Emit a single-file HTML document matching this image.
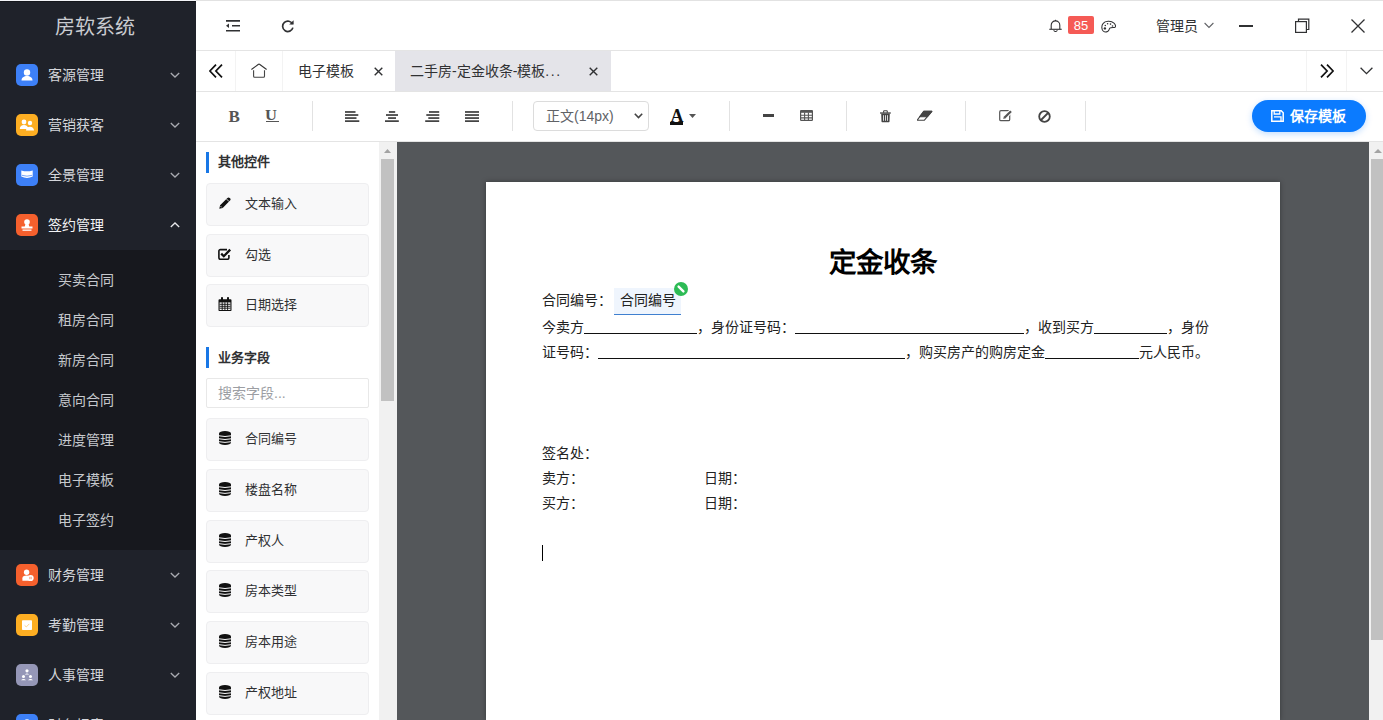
<!DOCTYPE html>
<html lang="zh-CN"><head><meta charset="utf-8">
<style>
*{box-sizing:border-box;margin:0;padding:0}
html,body{width:1383px;height:720px;overflow:hidden;background:#fff;font-family:"Liberation Sans",sans-serif;font-size:14px;color:#303133}
.abs{position:absolute}
svg{display:block}
/* sidebar */
#side{position:absolute;left:0;top:1px;width:196px;height:719px;background:#1f222a;overflow:hidden}
#logo{position:absolute;left:0;top:1px;width:196px;height:50px;line-height:50px;text-align:center;color:#c9cbd0;font-size:20px;padding-right:6px}
.mi{position:absolute;left:0;width:196px;height:50px;color:#d4d6db}
.mi .ic{position:absolute;left:16px;top:14px;width:22px;height:22px;border-radius:5px}
.mi .tx{position:absolute;left:48px;top:0;line-height:50px;font-size:14px}
.mi .ch{position:absolute;left:170px;top:21px}
#sub{position:absolute;left:0;top:249px;width:196px;height:300px;background:#17181e}
.si{position:absolute;left:58px;height:40px;line-height:40px;color:#c6c8cd;font-size:14px}
/* header */
#hdr{position:absolute;left:196px;top:0;width:1187px;height:51px;border-bottom:1px solid #e4e4e4;background:#fff}
#tabs{position:absolute;left:196px;top:51px;width:1187px;height:41px;border-bottom:1px solid #e4e4e4;background:#fff}
#tb{position:absolute;left:196px;top:92px;width:1187px;height:50px;background:#fff;border-bottom:1px solid #e4e4e4}
#lp{position:absolute;left:196px;top:142px;width:184px;height:578px;background:#fff}
#lsb{position:absolute;left:379px;top:142px;width:18px;height:578px;background:#f1f1f1}
#cv{position:absolute;left:397px;top:142px;width:972px;height:578px;background:#54575a}
#rsb{position:absolute;left:1369px;top:142px;width:14px;height:578px;background:#f1f1f1}
#paper{position:absolute;left:486px;top:182px;width:794px;height:538px;background:#fff;box-shadow:0 0 5px rgba(0,0,0,0.35)}
.card{left:10px;width:163px;height:43px;background:#f8f8f9;border:1px solid #eeeef0;border-radius:4px}
.ct{position:absolute;left:38px;top:-1px;line-height:41px;font-size:13px;color:#303133}
.pl{position:absolute;left:56px;height:20px;line-height:20px;font-size:14px;color:#222;white-space:nowrap}
.ul{display:inline-block;height:14px;border-bottom:1px solid #111;vertical-align:-2px}
.fld{position:relative;display:inline-block;margin-left:2px;padding:0 5.5px;height:27px;line-height:25px;vertical-align:-1px;top:-1px;background:#eff5fd;border-bottom:1px solid #3f80d0}
.badge{position:absolute;right:-7px;top:-6px}
.badge svg{display:block}
</style></head><body>
<div class="abs" style="left:0;top:0;width:196px;height:1px;background:#f3f4f8"></div>
<div id="side">
  <div class="abs" style="left:0;top:0;width:196px;height:1px;background:#15171c"></div>
  <div id="logo">房软系统</div>
  <div class="mi" style="top:49px"><svg class="ic" width="22" height="22" viewBox="0 0 22 22" style="background:#3d80f7"><circle cx="11" cy="8.5" r="3.2" fill="#fff"/><path d="M5.5 16.5c0-3 2.5-4.5 5.5-4.5s5.5 1.5 5.5 4.5z" fill="#fff"/></svg><span class="tx">客源管理</span><svg class="ch" width="10" height="8" viewBox="0 0 10 8"><path d="M0.8 2l4.2 4 4.2-4" stroke="#a9abb1" stroke-width="1.3" fill="none"/></svg></div>
  <div class="mi" style="top:99px"><svg class="ic" width="22" height="22" viewBox="0 0 22 22" style="background:#fdae22"><circle cx="8" cy="8" r="2.4" fill="#fff"/><circle cx="14" cy="9" r="2.2" fill="#fff"/><path d="M3.8 15c0-2.5 1.8-4 4.2-4s4.2 1.5 4.2 4z M10 16.5c0-2.3 1.8-3.8 4-3.8s4 1.5 4 3.8z" fill="#fff"/></svg><span class="tx">营销获客</span><svg class="ch" width="10" height="8" viewBox="0 0 10 8"><path d="M0.8 2l4.2 4 4.2-4" stroke="#a9abb1" stroke-width="1.3" fill="none"/></svg></div>
  <div class="mi" style="top:149px"><svg class="ic" width="22" height="22" viewBox="0 0 22 22" style="background:#3d80f7"><path d="M5.3 6.4Q11 8.2 16.7 6.4V12.6Q11 15.4 5.3 12.6Z" fill="#fff"/><path d="M5.8 11.3Q11 13 16.2 11.3" stroke="#3d80f7" stroke-width="0.7" fill="none"/></svg><span class="tx">全景管理</span><svg class="ch" width="10" height="8" viewBox="0 0 10 8"><path d="M0.8 2l4.2 4 4.2-4" stroke="#a9abb1" stroke-width="1.3" fill="none"/></svg></div>
  <div class="mi" style="top:199px"><svg class="ic" width="22" height="22" viewBox="0 0 22 22" style="background:#f5602d"><circle cx="11" cy="8" r="2.8" fill="#fff"/><path d="M9.5 10h3l0.8 2.5h3.2v2h-11v-2h3.2z" fill="#fff"/><rect x="6.5" y="15.5" width="9" height="1.3" fill="#fff"/></svg><span class="tx" style="color:#f2f3f5">签约管理</span><svg class="ch" width="10" height="8" viewBox="0 0 10 8"><path d="M0.8 6l4.2-4 4.2 4" stroke="#e8e9ec" stroke-width="1.3" fill="none"/></svg></div>
  <div class="mi" style="top:549px"><svg class="ic" width="22" height="22" viewBox="0 0 22 22" style="background:#f5602d"><circle cx="10.6" cy="8.3" r="2.7" fill="#fff"/><path d="M6.4 16.8V14.2q0-2.6 4.2-2.6q2.4 0 3.4 0.8V16.8z" fill="#fff"/><circle cx="14.6" cy="14" r="3.1" fill="#fff"/><path d="M13.8 12.8v2.4M15.2 12.8v2.4" stroke="#f5602d" stroke-width="0.6"/></svg><span class="tx">财务管理</span><svg class="ch" width="10" height="8" viewBox="0 0 10 8"><path d="M0.8 2l4.2 4 4.2-4" stroke="#a9abb1" stroke-width="1.3" fill="none"/></svg></div>
  <div class="mi" style="top:599px"><svg class="ic" width="22" height="22" viewBox="0 0 22 22" style="background:#fdae22"><rect x="6" y="6.2" width="10" height="9.8" rx="0.8" fill="#fff"/><path d="M8.6 11.4l1.7 1.5 3-3" stroke="#fdd48a" stroke-width="1" fill="none"/></svg><span class="tx">考勤管理</span><svg class="ch" width="10" height="8" viewBox="0 0 10 8"><path d="M0.8 2l4.2 4 4.2-4" stroke="#a9abb1" stroke-width="1.3" fill="none"/></svg></div>
  <div class="mi" style="top:649px"><svg class="ic" width="22" height="22" viewBox="0 0 22 22" style="background:#9597b7"><circle cx="11" cy="6.8" r="1.6" fill="#fff"/><path d="M8.8 10.5q2.2-2 4.4 0z" fill="#fff"/><circle cx="7.5" cy="12.5" r="1.5" fill="#fff"/><circle cx="14.5" cy="12.5" r="1.5" fill="#fff"/><path d="M5 16.2q2.5-2.6 5 0z M12 16.2q2.5-2.6 5 0z" fill="#fff"/></svg><span class="tx">人事管理</span><svg class="ch" width="10" height="8" viewBox="0 0 10 8"><path d="M0.8 2l4.2 4 4.2-4" stroke="#a9abb1" stroke-width="1.3" fill="none"/></svg></div>
  <div class="mi" style="top:699px"><svg class="ic" width="22" height="22" viewBox="0 0 22 22" style="background:#3d80f7"><circle cx="11" cy="8.5" r="3.2" fill="#fff"/><path d="M5.5 16.5c0-3 2.5-4.5 5.5-4.5s5.5 1.5 5.5 4.5z" fill="#fff"/></svg><span class="tx">财务报表</span><svg class="ch" width="10" height="8" viewBox="0 0 10 8"><path d="M0.8 2l4.2 4 4.2-4" stroke="#a9abb1" stroke-width="1.3" fill="none"/></svg></div>
  <div id="sub">
    <div class="si" style="top:10px">买卖合同</div>
    <div class="si" style="top:50px">租房合同</div>
    <div class="si" style="top:90px">新房合同</div>
    <div class="si" style="top:130px">意向合同</div>
    <div class="si" style="top:170px">进度管理</div>
    <div class="si" style="top:210px">电子模板</div>
    <div class="si" style="top:250px">电子签约</div>
  </div>
</div>
<div id="hdr">
  <div class="abs" style="left:0;top:0;width:1187px;height:1px;background:#e2e2e2"></div>
  <svg class="abs" style="left:30px;top:20px" width="14" height="12" viewBox="0 0 14 12"><path d="M0 0.9h14M6 5.8h8M0 10.8h14" stroke="#303133" stroke-width="1.6"/><path d="M0 5.8l3-2.2v4.4z" fill="#303133"/></svg>
  <svg class="abs" style="left:85px;top:19px" width="14" height="14" viewBox="0 0 14 14"><path d="M11.6 5.2A5.2 5.2 0 1 0 11.9 8.6" stroke="#303133" stroke-width="1.7" fill="none"/><path d="M8.2 5.6h4.4V1.2z" fill="#303133"/></svg>
  <svg class="abs" style="left:853px;top:19px" width="13" height="13" viewBox="0 0 13 13"><path d="M2.2 10V6.2a4.3 4.3 0 0 1 8.6 0V10" stroke="#303133" stroke-width="1.1" fill="none"/><path d="M0.3 10.3h12.4" stroke="#303133" stroke-width="1.1"/><path d="M6.5 0.8v1.2" stroke="#303133" stroke-width="1.1"/><path d="M5 11v0.8q0 0.7 0.7 0.7h1.6q0.7 0 0.7-0.7V11" stroke="#303133" stroke-width="1" fill="none"/></svg>
  <div class="abs" style="left:872px;top:16px;width:26px;height:18px;background:#f55a55;border-radius:2px;color:#fff;font-size:13px;line-height:20px;text-align:center">85</div>
  <svg class="abs" style="left:905px;top:19.5px" width="16" height="13" viewBox="0 0 16 13"><path d="M2.5 11.4C0.6 10.2 0.2 5.8 2 3.6C4 0.9 10 0.4 13 3.1C14.5 4.5 15 6.5 14 7.2C13 7.8 10.2 7 8.8 8.2C8 9 8.4 10.6 6.6 11.4C5.1 12.1 3.6 12 2.5 11.4Z" stroke="#303133" stroke-width="1.05" fill="none"/><circle cx="3.9" cy="8.4" r="1.2" fill="#303133"/><circle cx="4.3" cy="5.5" r="0.8" fill="#303133"/><circle cx="6.6" cy="3.8" r="0.8" fill="#303133"/><circle cx="9.5" cy="4.1" r="0.8" fill="#303133"/><circle cx="11.5" cy="6" r="0.8" fill="#303133"/></svg>
  <div class="abs" style="left:960px;top:1px;line-height:51px;font-size:14px;color:#303133">管理员</div>
  <svg class="abs" style="left:1008px;top:22px" width="10" height="7" viewBox="0 0 10 7"><path d="M0.6 1l4.4 4.4 4.4-4.4" stroke="#606266" stroke-width="1.1" fill="none"/></svg>
  <div class="abs" style="left:1043px;top:25px;width:14px;height:2px;background:#303133"></div>
  <svg class="abs" style="left:1099px;top:18px" width="15" height="15" viewBox="0 0 15 15"><path d="M3.5 3.5V1.2h10.3v10.3h-2.3" stroke="#303133" stroke-width="1.2" fill="none"/><rect x="0.6" y="3.6" width="10.8" height="10.8" stroke="#303133" stroke-width="1.2" fill="none"/></svg>
  <svg class="abs" style="left:1155px;top:19px" width="14" height="14" viewBox="0 0 14 14"><path d="M0.5 0.5l13 13M13.5 0.5l-13 13" stroke="#303133" stroke-width="1.3"/></svg>
</div>
<div id="tabs">
  <div class="abs" style="left:39px;top:0;width:1px;height:40px;background:#f3f3f3"></div>
  <div class="abs" style="left:86px;top:0;width:1px;height:40px;background:#f3f3f3"></div>
  <svg class="abs" style="left:13px;top:13px" width="14" height="14" viewBox="0 0 14 14"><path d="M7 0.6L0.9 7 7 13.4M13 0.6L6.9 7 13 13.4" stroke="#111" stroke-width="1.7" fill="none"/></svg>
  <svg class="abs" style="left:55px;top:12px" width="16" height="15" viewBox="0 0 16 15"><path d="M0.4 6.5L7.5 1.3Q8 0.9 8.5 1.3L15.6 6.5" stroke="#333" stroke-width="1.1" fill="none"/><path d="M2.6 7.3V13.3Q2.6 14.3 3.6 14.3H12.5Q13.5 14.3 13.5 13.3V7.3" stroke="#444" stroke-width="1.1" fill="none"/></svg>
  <div class="abs" style="left:102px;top:0;line-height:40px;font-size:14px;color:#303133">电子模板</div>
  <svg class="abs" style="left:178px;top:16px" width="9" height="9" viewBox="0 0 9 9"><path d="M0.7 0.7l7.6 7.6M8.3 0.7l-7.6 7.6" stroke="#303133" stroke-width="1.4"/></svg>
  <div class="abs" style="left:199px;top:0;width:216px;height:40px;background:#e4e4e9"></div>
  <div class="abs" style="left:214px;top:0;line-height:40px;font-size:14px;color:#303133">二手房-定金收条-模板<span style="letter-spacing:1.6px">...</span></div>
  <svg class="abs" style="left:393px;top:16px" width="9" height="9" viewBox="0 0 9 9"><path d="M0.7 0.7l7.6 7.6M8.3 0.7l-7.6 7.6" stroke="#303133" stroke-width="1.4"/></svg>
  <div class="abs" style="left:1110px;top:0;width:1px;height:40px;background:#f3f3f3"></div>
  <div class="abs" style="left:1150px;top:0;width:1px;height:40px;background:#f3f3f3"></div>
  <svg class="abs" style="left:1124px;top:13px" width="14" height="14" viewBox="0 0 14 14"><path d="M1 0.6L7.1 7 1 13.4M7 0.6L13.1 7 7 13.4" stroke="#111" stroke-width="1.7" fill="none"/></svg>
  <svg class="abs" style="left:1164px;top:16px" width="13" height="8" viewBox="0 0 13 8"><path d="M0.6 0.8l5.9 5.9 5.9-5.9" stroke="#303133" stroke-width="1.3" fill="none"/></svg>
</div>
<div id="tb">
  <div class="abs" style="left:32.5px;top:1px;line-height:48px;font-family:'Liberation Serif',serif;font-weight:bold;font-size:17px;color:#555">B</div>
  <div class="abs" style="left:69px;top:0;line-height:47px;font-family:'Liberation Serif',serif;font-weight:bold;font-size:15px;color:#555;transform:scaleX(1.1);transform-origin:left">U</div>
  <div class="abs" style="left:69.5px;top:28.8px;width:13px;height:1.5px;background:#555"></div>
  <div class="abs" style="left:116px;top:9px;width:1px;height:30px;background:#e2e2e2"></div>
  <svg class="abs" style="left:149px;top:18.5px" width="15" height="12" viewBox="0 0 15 12"><rect x="0" y="0.10" width="10.5" height="1.75" fill="#444"/><rect x="0" y="3.15" width="13.3" height="1.75" fill="#444"/><rect x="0" y="6.20" width="11.5" height="1.75" fill="#444"/><rect x="0" y="9.25" width="14.3" height="1.75" fill="#444"/></svg>
  <svg class="abs" style="left:189px;top:18.5px" width="15" height="12" viewBox="0 0 15 12"><rect x="3.9" y="0.10" width="6.3" height="1.75" fill="#444"/><rect x="1" y="3.15" width="12" height="1.75" fill="#444"/><rect x="3.1" y="6.20" width="7.9" height="1.75" fill="#444"/><rect x="0" y="9.25" width="13.8" height="1.75" fill="#444"/></svg>
  <svg class="abs" style="left:229px;top:18.5px" width="15" height="12" viewBox="0 0 15 12"><rect x="4" y="0.10" width="10.2" height="1.75" fill="#444"/><rect x="1.3" y="3.15" width="13" height="1.75" fill="#444"/><rect x="3.3" y="6.20" width="11" height="1.75" fill="#444"/><rect x="0.2" y="9.25" width="14" height="1.75" fill="#444"/></svg>
  <svg class="abs" style="left:269px;top:18.5px" width="15" height="12" viewBox="0 0 15 12"><rect x="0" y="0.10" width="14" height="1.75" fill="#444"/><rect x="0" y="3.15" width="14" height="1.75" fill="#444"/><rect x="0" y="6.20" width="14" height="1.75" fill="#444"/><rect x="0" y="9.25" width="14" height="1.75" fill="#444"/></svg>
  <div class="abs" style="left:316px;top:9px;width:1px;height:30px;background:#e2e2e2"></div>
  <div class="abs" style="left:337px;top:9px;width:116px;height:30px;border:1px solid #dcdcdc;border-radius:4px;background:#fff"></div>
  <div class="abs" style="left:350px;top:9px;line-height:30px;font-size:14px;color:#606266">正文(14px)</div>
  <svg class="abs" style="left:438px;top:21px" width="9" height="6" viewBox="0 0 9 6"><path d="M0.8 0.8l3.7 3.7 3.7-3.7" stroke="#444" stroke-width="1.6" fill="none"/></svg>
  <div class="abs" style="left:474.5px;top:0.5px;line-height:46px;font-family:'Liberation Serif',serif;font-weight:bold;font-size:18px;color:#111">A</div>
  <div class="abs" style="left:474px;top:30px;width:13px;height:2.5px;background:#111"></div>
  <svg class="abs" style="left:493px;top:22px" width="7" height="4" viewBox="0 0 7 4"><path d="M0 0h7L3.5 4z" fill="#555"/></svg>
  <div class="abs" style="left:533px;top:9px;width:1px;height:30px;background:#e2e2e2"></div>
  <div class="abs" style="left:567px;top:22px;width:11px;height:3px;background:#444"></div>
  <svg class="abs" style="left:604px;top:18px" width="13" height="11" viewBox="0 0 13 11"><rect x="0.6" y="0.6" width="11.8" height="9.8" rx="0.6" fill="none" stroke="#555" stroke-width="1.2"/><rect x="0.6" y="0.6" width="11.8" height="2.2" fill="#555"/><path d="M0.6 5.3h11.8M0.6 7.9h11.8M4.6 2.5v8M8.4 2.5v8" stroke="#555" stroke-width="1.1"/></svg>
  <div class="abs" style="left:650px;top:9px;width:1px;height:30px;background:#e2e2e2"></div>
  <svg class="abs" style="left:684px;top:17.5px" width="11" height="13" viewBox="0 0 11 13"><path d="M0 3h10.8" stroke="#444" stroke-width="1.3"/><path d="M3.6 2.8V1.4Q3.6 0.7 4.3 0.7H6.6Q7.3 0.7 7.3 1.4V2.8" stroke="#444" stroke-width="1.1" fill="none"/><path d="M1.2 3.6h8.6l-0.3 8q0 0.6-0.6 0.6H2.1q-0.6 0-0.6-0.6z" fill="#444"/><path d="M3.5 5.2v5.6M5.5 5.2v5.6M7.5 5.2v5.6" stroke="#fff" stroke-width="0.8"/></svg>
  <svg class="abs" style="left:721px;top:18px" width="16" height="12" viewBox="0 0 16 12"><path d="M6.8 1.4H14.8L7.2 10.3H0Z" fill="none" stroke="#444" stroke-width="1.1" stroke-linejoin="round"/><path d="M6.8 1.4H14.8L10.2 6.8H2.7Z" fill="#444" stroke="#444" stroke-width="1.1" stroke-linejoin="round"/></svg>
  <div class="abs" style="left:769px;top:9px;width:1px;height:30px;background:#e2e2e2"></div>
  <svg class="abs" style="left:803px;top:18px" width="15" height="12" viewBox="0 0 15 12"><rect x="0.7" y="0.7" width="10" height="10" rx="1.3" stroke="#555" stroke-width="1.2" fill="none"/><path d="M4.6 8.6L12.4 0.8" stroke="#fff" stroke-width="4.2"/><path d="M5.4 7.8L12 1.2" stroke="#555" stroke-width="2.3"/><path d="M4.2 9.1l0.7-2.4 1.6 1.6z" fill="#555"/></svg>
  <svg class="abs" style="left:842px;top:17.5px" width="13" height="13" viewBox="0 0 13 13"><circle cx="6.5" cy="6.5" r="5.3" stroke="#444" stroke-width="1.8" fill="none"/><path d="M3 10L10 3" stroke="#444" stroke-width="1.8"/></svg>
  <div class="abs" style="left:889px;top:9px;width:1px;height:30px;background:#e2e2e2"></div>
  <div class="abs" style="left:1056px;top:8px;width:114px;height:32px;border-radius:16px;background:#0b7bff;box-shadow:0 2px 6px rgba(11,123,255,0.25)"></div>
  <svg class="abs" style="left:1075px;top:18px" width="13" height="12" viewBox="0 0 13 12"><path d="M0.8 0.8h9.4l2 2v8.4H0.8z" stroke="#fff" stroke-width="1.5" fill="none"/><path d="M3.2 0.8v3.2h5.6V0.8" stroke="#fff" stroke-width="1.3" fill="none"/><path d="M3 6.8h7v4.4" stroke="#fff" stroke-width="1.3" fill="none"/></svg>
  <div class="abs" style="left:1094px;top:8px;line-height:32px;font-size:14px;font-weight:bold;color:#fff">保存模板</div>
</div>
<div id="lp">
  <div class="abs" style="left:10px;top:10px;width:3px;height:21px;background:#1877e6"></div>
  <div class="abs" style="left:22px;top:9px;line-height:21px;font-size:13px;font-weight:bold;color:#303133">其他控件</div>
  <div class="abs card" style="top:41px"><svg class="abs" style="left:12px;top:13px" width="12" height="12" viewBox="0 0 12 12"><path d="M0.3 11.7L1.1 8.3 8.4 1A1.6 1.6 0 0 1 10.7 1L11 1.3A1.6 1.6 0 0 1 11 3.6L3.7 10.9Z" fill="#111"/><path d="M7.5 2l2.5 2.5M1.6 9.2l1.2 1.2" stroke="#f8f8f9" stroke-width="0.8"/></svg><span class="ct">文本输入</span></div>
  <div class="abs card" style="top:92px"><svg class="abs" style="left:11px;top:13px" width="14" height="12" viewBox="0 0 14 12"><path d="M9 1.6H2.4A1.5 1.5 0 0 0 0.9 3.1v6.7a1.5 1.5 0 0 0 1.5 1.5h7a1.5 1.5 0 0 0 1.5-1.5V7" stroke="#111" stroke-width="1.6" fill="none"/><path d="M3.2 5.6l2.6 2.6 6.4-6.6" stroke="#111" stroke-width="2.3" fill="none"/></svg><span class="ct">勾选</span></div>
  <div class="abs card" style="top:142px"><svg class="abs" style="left:11px;top:12px" width="14" height="14" viewBox="0 0 14 14"><path d="M0.5 3.2A1 1 0 0 1 1.5 2.2H12.5A1 1 0 0 1 13.5 3.2V13.2A0.8 0.8 0 0 1 12.7 14H1.3A0.8 0.8 0 0 1 0.5 13.2Z" fill="#111"/><rect x="3" y="0" width="2" height="3.6" rx="0.8" fill="#111"/><rect x="9" y="0" width="2" height="3.6" rx="0.8" fill="#111"/><path d="M1.6 5.4h10.8v7.6H1.6z" fill="#f8f8f9"/><path d="M1.6 7.3h10.8M1.6 9.3h10.8M1.6 11.2h10.8M4.2 5.2v8M6.9 5.2v8M9.6 5.2v8" stroke="#111" stroke-width="0.9"/></svg><span class="ct">日期选择</span></div>
  <div class="abs" style="left:10px;top:205px;width:3px;height:21px;background:#1877e6"></div>
  <div class="abs" style="left:22px;top:205px;line-height:21px;font-size:13px;font-weight:bold;color:#303133">业务字段</div>
  <div class="abs" style="left:10px;top:236px;width:163px;height:30px;border:1px solid #e8e8e8;border-radius:2px;line-height:28px;padding-left:11px;font-size:14px;color:#9c9ea3">搜索字段...</div>
  <div class="abs card" style="top:276px"><svg class="abs" style="left:12px;top:12px" width="12" height="14" viewBox="0 0 12 14"><path d="M0 2.2A6 2.2 0 0 1 12 2.2V11.8A6 2.2 0 0 1 0 11.8Z" fill="#111"/><path d="M-1 4.7Q6 6.3 13 4.7M-1 7.7Q6 9.3 13 7.7M-1 10.6Q6 12.2 13 10.6" stroke="#f8f8f9" stroke-width="1" fill="none"/></svg><span class="ct">合同编号</span></div>
  <div class="abs card" style="top:327px"><svg class="abs" style="left:12px;top:12px" width="12" height="14" viewBox="0 0 12 14"><path d="M0 2.2A6 2.2 0 0 1 12 2.2V11.8A6 2.2 0 0 1 0 11.8Z" fill="#111"/><path d="M-1 4.7Q6 6.3 13 4.7M-1 7.7Q6 9.3 13 7.7M-1 10.6Q6 12.2 13 10.6" stroke="#f8f8f9" stroke-width="1" fill="none"/></svg><span class="ct">楼盘名称</span></div>
  <div class="abs card" style="top:378px"><svg class="abs" style="left:12px;top:12px" width="12" height="14" viewBox="0 0 12 14"><path d="M0 2.2A6 2.2 0 0 1 12 2.2V11.8A6 2.2 0 0 1 0 11.8Z" fill="#111"/><path d="M-1 4.7Q6 6.3 13 4.7M-1 7.7Q6 9.3 13 7.7M-1 10.6Q6 12.2 13 10.6" stroke="#f8f8f9" stroke-width="1" fill="none"/></svg><span class="ct">产权人</span></div>
  <div class="abs card" style="top:428px"><svg class="abs" style="left:12px;top:12px" width="12" height="14" viewBox="0 0 12 14"><path d="M0 2.2A6 2.2 0 0 1 12 2.2V11.8A6 2.2 0 0 1 0 11.8Z" fill="#111"/><path d="M-1 4.7Q6 6.3 13 4.7M-1 7.7Q6 9.3 13 7.7M-1 10.6Q6 12.2 13 10.6" stroke="#f8f8f9" stroke-width="1" fill="none"/></svg><span class="ct">房本类型</span></div>
  <div class="abs card" style="top:479px"><svg class="abs" style="left:12px;top:12px" width="12" height="14" viewBox="0 0 12 14"><path d="M0 2.2A6 2.2 0 0 1 12 2.2V11.8A6 2.2 0 0 1 0 11.8Z" fill="#111"/><path d="M-1 4.7Q6 6.3 13 4.7M-1 7.7Q6 9.3 13 7.7M-1 10.6Q6 12.2 13 10.6" stroke="#f8f8f9" stroke-width="1" fill="none"/></svg><span class="ct">房本用途</span></div>
  <div class="abs card" style="top:530px"><svg class="abs" style="left:12px;top:12px" width="12" height="14" viewBox="0 0 12 14"><path d="M0 2.2A6 2.2 0 0 1 12 2.2V11.8A6 2.2 0 0 1 0 11.8Z" fill="#111"/><path d="M-1 4.7Q6 6.3 13 4.7M-1 7.7Q6 9.3 13 7.7M-1 10.6Q6 12.2 13 10.6" stroke="#f8f8f9" stroke-width="1" fill="none"/></svg><span class="ct">产权地址</span></div>
  <div class="abs card" style="top:581px"><svg class="abs" style="left:12px;top:12px" width="12" height="14" viewBox="0 0 12 14"><path d="M0 2.2A6 2.2 0 0 1 12 2.2V11.8A6 2.2 0 0 1 0 11.8Z" fill="#111"/><path d="M-1 4.7Q6 6.3 13 4.7M-1 7.7Q6 9.3 13 7.7M-1 10.6Q6 12.2 13 10.6" stroke="#f8f8f9" stroke-width="1" fill="none"/></svg><span class="ct">产权面积</span></div>
</div>
<div id="lsb"><svg class="abs" style="left:5px;top:7px" width="7" height="4" viewBox="0 0 7 4"><path d="M0 4L3.5 0 7 4z" fill="#a3a3a3"/></svg><div class="abs" style="left:2px;top:17px;width:13px;height:242px;background:#c1c1c1"></div></div>
<div id="cv"></div>
<div id="rsb"><svg class="abs" style="left:5px;top:7px" width="8" height="4" viewBox="0 0 8 4"><path d="M0 4L4 0 8 4z" fill="#a3a3a3"/></svg><div class="abs" style="left:2px;top:17px;width:13px;height:481px;background:#c1c1c1"></div></div>
<div id="paper">
  <div class="abs" style="left:0;top:63px;width:794px;text-align:center;font-size:27.5px;font-weight:bold;line-height:36px;color:#000">定金收条</div>
  <div class="pl" style="top:107px">合同编号：<span class="fld">合同编号<span class="badge"><svg width="14" height="14" viewBox="0 0 14 14"><circle cx="7" cy="7" r="7" fill="#2dbb55"/><path d="M4.6 4.6l4.8 4.8" stroke="#fff" stroke-width="2.4" stroke-linecap="round"/></svg></span></span></div>
  <div class="pl" style="top:135px">今卖方<span class="ul" style="width:113px"></span>，身份证号码：<span class="ul" style="width:229px"></span>，收到买方<span class="ul" style="width:73px"></span>，身份</div>
  <div class="pl" style="top:160px">证号码：<span class="ul" style="width:307px"></span>，购买房产的购房定金<span class="ul" style="width:94px"></span>元人民币。</div>
  <div class="pl" style="top:261px">签名处：</div>
  <div class="pl" style="top:286px">卖方：</div>
  <div class="pl" style="top:286px;left:218px">日期：</div>
  <div class="pl" style="top:311px">买方：</div>
  <div class="pl" style="top:311px;left:218px">日期：</div>
  <div class="abs" style="left:56px;top:363px;width:1px;height:16px;background:#000"></div>
</div>
</body></html>
